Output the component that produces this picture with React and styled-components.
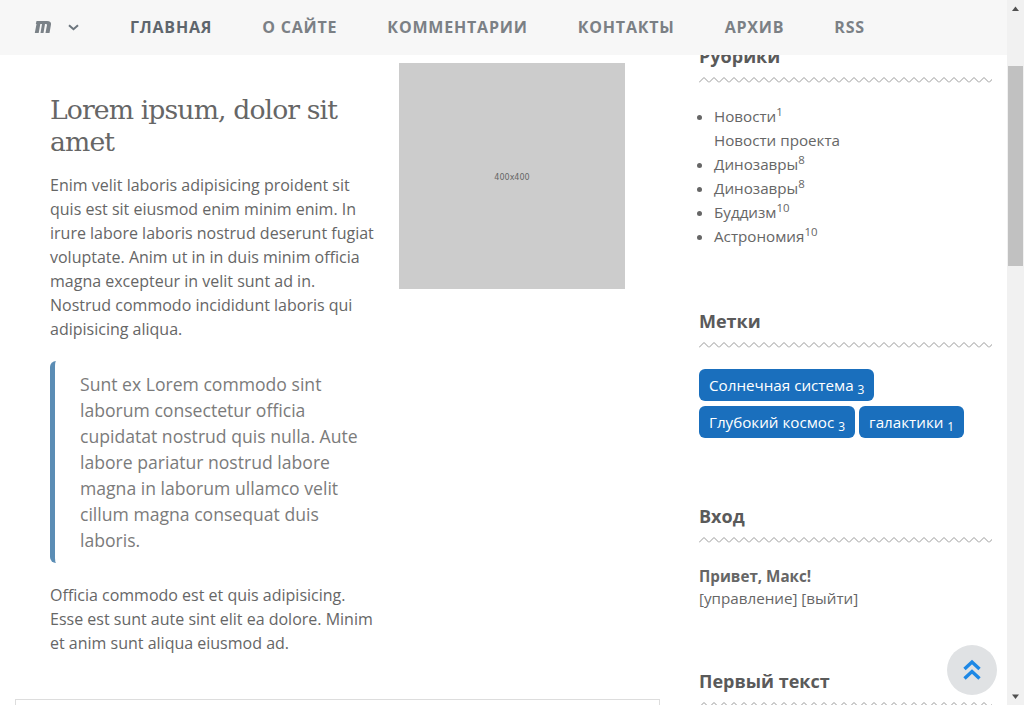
import React from "react";
import styled, { createGlobalStyle } from "styled-components";

const Global = createGlobalStyle`
  html, body { margin: 0; padding: 0; height: 100%; overflow: hidden; background: #fff; }
  body { font-family: "Open Sans", "Liberation Sans", sans-serif; font-size: 16px; line-height: 24px; color: #666; }
  * { box-sizing: border-box; }
`;

const zig = `url("data:image/svg+xml,%3Csvg xmlns='http://www.w3.org/2000/svg' width='10' height='8'%3E%3Cpath d='M0 6.5 L5 1.5 L10 6.5' fill='none' stroke='%23999' stroke-width='1'/%3E%3C/svg%3E")`;

const Viewport = styled.div`
  display: flex;
  height: 705px;
  overflow: hidden;
`;
const Page = styled.div`
  flex: 1;
  display: flex;
  align-items: flex-start;
  padding-left: 15px;
  min-width: 0;
`;
const Header = styled.header`
  position: fixed;
  top: 0;
  left: 0;
  width: 1007px;
  height: 55px;
  background: #f7f7f7;
  display: flex;
  align-items: center;
  padding: 0 0 1px 34px;
  z-index: 5;
`;
const Logo = styled.svg`
  width: 18px;
  height: 14px;
  flex: none;
`;
const Caret = styled.svg`
  width: 11px;
  height: 7px;
  flex: none;
  margin-left: 16px;
  margin-right: 51px;
`;
const NavLink = styled.a`
  font-weight: 700;
  font-size: 16px;
  letter-spacing: 0.8px;
  text-transform: uppercase;
  color: ${(p) => (p.$active ? "#5f666d" : "#7b8085")};
  margin-right: 50px;
  white-space: nowrap;
`;
const Main = styled.main`
  width: 645px;
  padding-top: 63px;
  flex: none;
`;
const Article = styled.article`
  display: flex;
  align-items: flex-start;
  gap: 24px;
  padding-left: 35px;
`;
const TextCol = styled.div`
  width: 325px;
  flex: none;
  padding-top: 31px;
`;
const Title = styled.h1`
  margin: 0 0 15px;
  font: 400 26.7px/32px "DejaVu Serif", serif;
  letter-spacing: -0.9px;
  color: #666;
`;
const Para = styled.p`
  margin: 0 0 20px;
`;
const Quote = styled.blockquote`
  margin: 0 0 20px;
  padding: 10px 0 10px 25px;
  border-left: 5px solid #5b8db5;
  border-radius: 6px 0 0 6px;
  font-size: 17.6px;
  line-height: 26px;
  color: #7b7b7b;
`;
const Placeholder = styled.div`
  width: 226px;
  height: 226px;
  flex: none;
  padding-top: 3px;
  background: #ccc;
  color: #666;
  font: 8px/1 "DejaVu Sans", sans-serif;
  display: flex;
  align-items: center;
  justify-content: center;
`;
const Card = styled.div`
  margin-top: 24px;
  height: 60px;
  border: 1px solid #ddd;
`;
const Side = styled.aside`
  width: 293px;
  margin-left: 39px;
  padding-top: 44px;
  flex: none;
`;
const Widget = styled.section`
  margin-bottom: ${(p) => p.$gap}px;
`;
const WidgetTitle = styled.h3`
  margin: 0 0 20px;
  font-size: 18px;
  font-weight: 700;
  line-height: 25px;
  color: #5a5a5a;
  padding-bottom: 15px;
  background: ${zig} repeat-x left bottom;
`;
const List = styled.ul`
  margin: 0;
  padding: 0 0 0 15px;
  font-size: 15.2px;
`;
const Sup = styled.sup`
  font-size: 11.4px;
  line-height: 0;
`;
const Tags = styled.div`
  display: flex;
  flex-wrap: wrap;
  gap: 5px 4px;
`;
const Tag = styled.a`
  height: 32px;
  padding: 0 10px;
  border-radius: 6px;
  background: #1a6fbd;
  color: #fff;
  font-size: 15.2px;
  line-height: 32px;
  white-space: nowrap;
`;
const Sub = styled.sub`
  font-size: 12px;
  line-height: 0;
  vertical-align: -3px;
`;
const Login = styled.div`
  padding-top: 1px;
  font-size: 15.2px;
  line-height: 22px;
`;
const Bar = styled.div`
  width: 17px;
  flex: none;
  height: 705px;
  background: #f1f1f1;
  display: flex;
  flex-direction: column;
  align-items: center;
`;
const Arrow = styled.svg`
  width: 17px;
  height: 17px;
  flex: none;
`;
const Thumb = styled.div`
  width: 15px;
  height: 200px;
  margin-top: 49px;
  background: #c1c1c1;
  flex: none;
`;
const Spacer = styled.div`
  flex: 1;
`;
const TopButton = styled.a`
  position: fixed;
  left: 947px;
  top: 645px;
  width: 50px;
  height: 50px;
  border-radius: 50%;
  background: #e0e2e4;
  display: flex;
  align-items: center;
  justify-content: center;
  z-index: 6;
`;

export default function App() {
  return (
    <>
      <Global />
      <Viewport>
        <Header>
          <Logo viewBox="0 0 18 14">
            <path
              d="M2.5 1 H13 Q17.5 1 17 4.5 L15.5 13 H11.5 L13 5 Q13 4 12 4 H11 L9.5 13 H6.5 L8 4 H6.3 L4.7 13 H0.8 L2.5 4 H1.8 Z"
              fill="#7b8288"
            />
          </Logo>
          <Caret viewBox="0 0 11 7">
            <path d="M1 1.2 L5.5 5.2 L10 1.2" fill="none" stroke="#6c757d" strokeWidth="2" />
          </Caret>
          <NavLink $active>Главная</NavLink>
          <NavLink>О сайте</NavLink>
          <NavLink>Комментарии</NavLink>
          <NavLink>Контакты</NavLink>
          <NavLink>Архив</NavLink>
          <NavLink>RSS</NavLink>
        </Header>
        <Page>
          <Main>
            <Article>
              <TextCol>
                <Title>Lorem ipsum, dolor sit amet</Title>
                <Para>
                  Enim velit laboris adipisicing proident sit quis est sit eiusmod enim minim enim. In irure labore laboris nostrud deserunt fugiat voluptate. Anim ut in in duis minim officia magna excepteur in velit sunt ad in. Nostrud commodo incididunt laboris qui adipisicing aliqua.
                </Para>
                <Quote>
                  Sunt ex Lorem commodo sint laborum consectetur officia cupidatat nostrud quis nulla. Aute labore pariatur nostrud labore magna in laborum ullamco velit cillum magna consequat duis laboris.
                </Quote>
                <Para>
                  Officia commodo est et quis adipisicing. Esse est sunt aute sint elit ea dolore. Minim et anim sunt aliqua eiusmod ad.
                </Para>
              </TextCol>
              <Placeholder>400x400</Placeholder>
            </Article>
            <Card />
          </Main>
          <Side>
            <Widget $gap={61}>
              <WidgetTitle>Рубрики</WidgetTitle>
              <List>
                <li>Новости<Sup>1</Sup><br />Новости проекта</li>
                <li>Динозавры<Sup>8</Sup></li>
                <li>Динозавры<Sup>8</Sup></li>
                <li>Буддизм<Sup>10</Sup></li>
                <li>Астрономия<Sup>10</Sup></li>
              </List>
            </Widget>
            <Widget $gap={66}>
              <WidgetTitle>Метки</WidgetTitle>
              <Tags>
                <Tag>Солнечная система <Sub>3</Sub></Tag>
                <Tag>Глубокий космос <Sub>3</Sub></Tag>
                <Tag>галактики <Sub>1</Sub></Tag>
              </Tags>
            </Widget>
            <Widget $gap={60}>
              <WidgetTitle>Вход</WidgetTitle>
              <Login>
                <b>Привет, Макс!</b><br />
                [управление] [выйти]
              </Login>
            </Widget>
            <Widget $gap={0}>
              <WidgetTitle>Первый текст</WidgetTitle>
            </Widget>
          </Side>
        </Page>
        <Bar>
          <Arrow viewBox="0 0 17 17"><path d="M5 11 H12 L8.5 6.5 Z" fill="#505050" /></Arrow>
          <Thumb />
          <Spacer />
          <Arrow viewBox="0 0 17 17"><path d="M5 6.5 H12 L8.5 11 Z" fill="#505050" /></Arrow>
        </Bar>
        <TopButton>
          <svg width="18" height="22" viewBox="0 0 18 22">
            <path d="M1.5 10 L9 3 L16.5 10 M1.5 19.5 L9 12.5 L16.5 19.5" fill="none" stroke="#1e88e5" strokeWidth="3.4" />
          </svg>
        </TopButton>
      </Viewport>
    </>
  );
}
